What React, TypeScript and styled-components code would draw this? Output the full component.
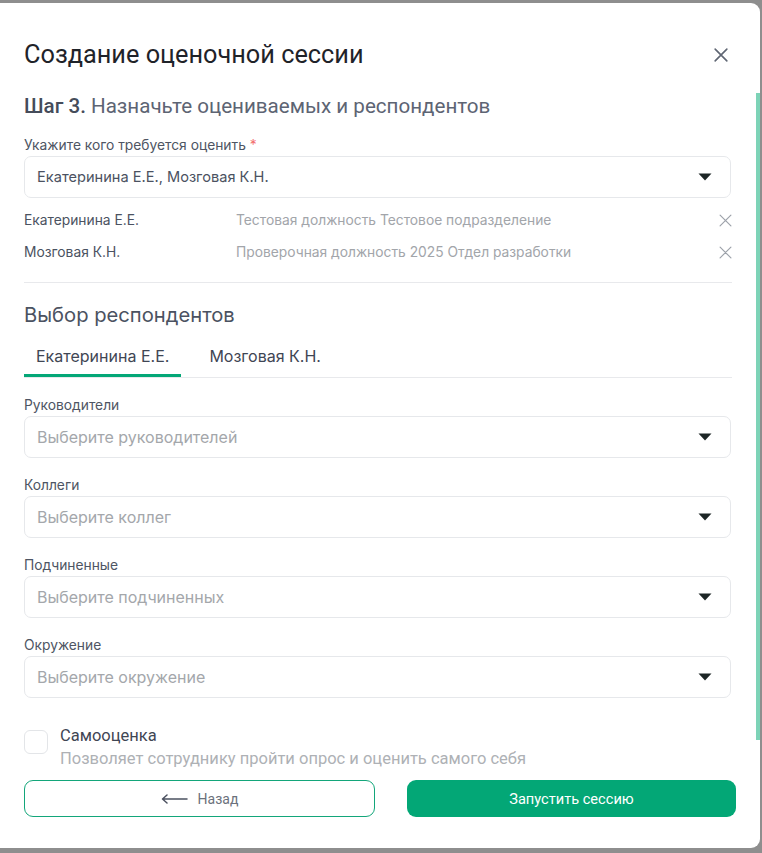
import React from 'react'
import styled, { createGlobalStyle } from 'styled-components'

const GlobalStyle = createGlobalStyle`
  html, body {
    margin: 0;
    padding: 0;
    background: #8e8e8e;
    overflow: hidden;
  }
  * {
    box-sizing: border-box;
  }
`

const wide = `Inter, "Noto Sans", sans-serif`
const narrow = `Roboto, "Liberation Sans", sans-serif`

const people = [
  { name: 'Екатеринина Е.Е.', position: 'Тестовая должность Тестовое подразделение' },
  { name: 'Мозговая К.Н.', position: 'Проверочная должность 2025 Отдел разработки' },
]

const groups = [
  { label: 'Руководители', placeholder: 'Выберите руководителей' },
  { label: 'Коллеги', placeholder: 'Выберите коллег' },
  { label: 'Подчиненные', placeholder: 'Выберите подчиненных' },
  { label: 'Окружение', placeholder: 'Выберите окружение' },
]

const Caret = () => (
  <svg width="14" height="8" viewBox="0 0 14 8">
    <path d="M0.5 0.5 H13.5 L7 7.5 Z" fill="#1d2626" />
  </svg>
)

const Cross = ({ size, color, width }: { size: number; color: string; width: number }) => (
  <svg width={size} height={size} viewBox="0 0 12 12">
    <path d="M1 1 L11 11 M11 1 L1 11" stroke={color} strokeWidth={width} strokeLinecap="round" />
  </svg>
)

const LongArrow = () => (
  <svg width="27" height="10" viewBox="0 0 27 10">
    <path d="M26 5 H2 M6 1 L1.5 5 L6 9" stroke="#4b5160" strokeWidth="1.5" fill="none" strokeLinecap="round" strokeLinejoin="round" />
  </svg>
)

export default function App() {
  return (
    <>
      <GlobalStyle />
      <Modal>
        <ScrollThumb />
        <Header>
          <Title>Создание оценочной сессии</Title>
          <CloseButton>
            <Cross size={14} color="#5f6673" width={1.4} />
          </CloseButton>
        </Header>
        <Step>
          <b>Шаг 3.</b> Назначьте оцениваемых и респондентов
        </Step>

        <Label>
          Укажите кого требуется оценить <Required>*</Required>
        </Label>
        <Select>
          <SelectText>Екатеринина Е.Е., Мозговая К.Н.</SelectText>
          <Caret />
        </Select>

        <PeopleList>
          {people.map((p) => (
            <PersonRow key={p.name}>
              <PersonName>{p.name}</PersonName>
              <PersonPosition>{p.position}</PersonPosition>
              <Cross size={13} color="#9ea3ab" width={1.1} />
            </PersonRow>
          ))}
        </PeopleList>

        <Divider />

        <SectionTitle>Выбор респондентов</SectionTitle>
        <Tabs>
          <Tab $active>Екатеринина Е.Е.</Tab>
          <Tab>Мозговая К.Н.</Tab>
        </Tabs>

        {groups.map((g) => (
          <FieldGroup key={g.label}>
            <Label>{g.label}</Label>
            <Select>
              <SelectText $placeholder>{g.placeholder}</SelectText>
              <Caret />
            </Select>
          </FieldGroup>
        ))}

        <SelfRow>
          <Checkbox />
          <SelfText>
            <SelfTitle>Самооценка</SelfTitle>
            <SelfHint>Позволяет сотруднику пройти опрос и оценить самого себя</SelfHint>
          </SelfText>
        </SelfRow>

        <Footer>
          <BackButton>
            <LongArrow />
            Назад
          </BackButton>
          <PrimaryButton>Запустить сессию</PrimaryButton>
        </Footer>
      </Modal>
    </>
  )
}

const Modal = styled.div`
  position: relative;
  width: 760px;
  height: 845px;
  margin-top: 3px;
  background: #fff;
  border-radius: 0 9px 9px 0;
  padding: 0 28px 0 24px;
  overflow: hidden;
`

const ScrollThumb = styled.div`
  position: absolute;
  right: 0;
  top: 90px;
  width: 4px;
  height: 647px;
  background: #7dd3b7;
`

const Header = styled.div`
  display: flex;
  align-items: center;
  justify-content: space-between;
  padding-top: 36px;
  height: 68px;
`

const Title = styled.h1`
  margin: 0;
  font-family: ${narrow};
  font-weight: 400;
  font-size: 25.3px;
  line-height: 32px;
  color: #1f2329;
`

const CloseButton = styled.div`
  display: flex;
  width: 20px;
  height: 20px;
  align-items: center;
  justify-content: center;
  margin-right: 1px;
`

const Step = styled.div`
  margin-top: 23px;
  font-family: ${narrow};
  font-size: 20.6px;
  line-height: 24px;
  color: #5d6473;

  b {
    font-weight: 500;
    color: #454c5a;
  }
`

const Label = styled.div`
  margin-top: 18px;
  margin-bottom: 2px;
  font-family: ${wide};
  font-size: 13.8px;
  line-height: 18px;
  color: #4e5563;
`

const Required = styled.span`
  color: #f26d6d;
`

const Select = styled.div`
  display: flex;
  align-items: center;
  justify-content: space-between;
  height: 42px;
  padding: 0 18px 0 12px;
  border: 1px solid #e6e8eb;
  border-radius: 7px;
  margin-right: 1px;
`

const SelectText = styled.span<{ $placeholder?: boolean }>`
  font-family: ${wide};
  font-size: ${(p) => (p.$placeholder ? '16px' : '14.6px')};
  color: ${(p) => (p.$placeholder ? '#a4a7ab' : '#4b5261')};
`

const PeopleList = styled.div`
  margin-top: 6px;
`

const PersonRow = styled.div`
  display: grid;
  grid-template-columns: 212px 1fr auto;
  align-items: center;
  height: 32px;
  font-family: ${wide};
  font-size: 13.8px;
`

const PersonName = styled.span`
  color: #4b5261;
`

const PersonPosition = styled.span`
  color: #a2a5aa;
`

const Divider = styled.hr`
  margin: 14px 0 0;
  border: none;
  border-top: 1px solid #e8e9ec;
`

const SectionTitle = styled.h2`
  margin: 19px 0 0;
  font-family: ${wide};
  font-weight: 400;
  font-size: 20.2px;
  line-height: 26px;
  color: #4b5261;
`

const Tabs = styled.div`
  display: flex;
  gap: 16px;
  margin-top: 2px;
  border-bottom: 1px solid #e8e9ec;
`

const Tab = styled.div<{ $active?: boolean }>`
  padding: 16px 12px 8px;
  font-family: ${wide};
  font-size: 16px;
  line-height: 20px;
  color: #3f4654;
  border-bottom: 3px solid ${(p) => (p.$active ? '#04a777' : 'transparent')};
`

const FieldGroup = styled.div`
  & > ${Label} {
    margin-top: 18px;
  }
`

const SelfRow = styled.div`
  display: flex;
  gap: 12px;
  margin-top: 26px;
`

const Checkbox = styled.div`
  flex: none;
  width: 24px;
  height: 24px;
  margin-top: 6px;
  border: 1px solid #e3e5e8;
  border-radius: 6px;
`

const SelfText = styled.div`
  display: flex;
  flex-direction: column;
  font-family: ${narrow};
  font-size: 16.5px;
  line-height: 23px;
`

const SelfTitle = styled.span`
  color: #3f4654;
`

const SelfHint = styled.span`
  color: #aeb1b5;
`

const Footer = styled.div`
  display: grid;
  grid-template-columns: 351px 329px;
  gap: 32px;
  margin-top: 10px;
  margin-right: -4px;
`

const buttonBase = `
  display: flex;
  align-items: center;
  justify-content: center;
  height: 37px;
  border-radius: 9px;
  font-family: ${narrow};
`

const BackButton = styled.button`
  ${buttonBase}
  gap: 10px;
  font-size: 14px;
  background: #fff;
  border: 1px solid #13a67a;
  color: #6b717c;
`

const PrimaryButton = styled.button`
  ${buttonBase}
  font-size: 14.6px;
  background: #03a776;
  border: none;
  color: #fff;
`
